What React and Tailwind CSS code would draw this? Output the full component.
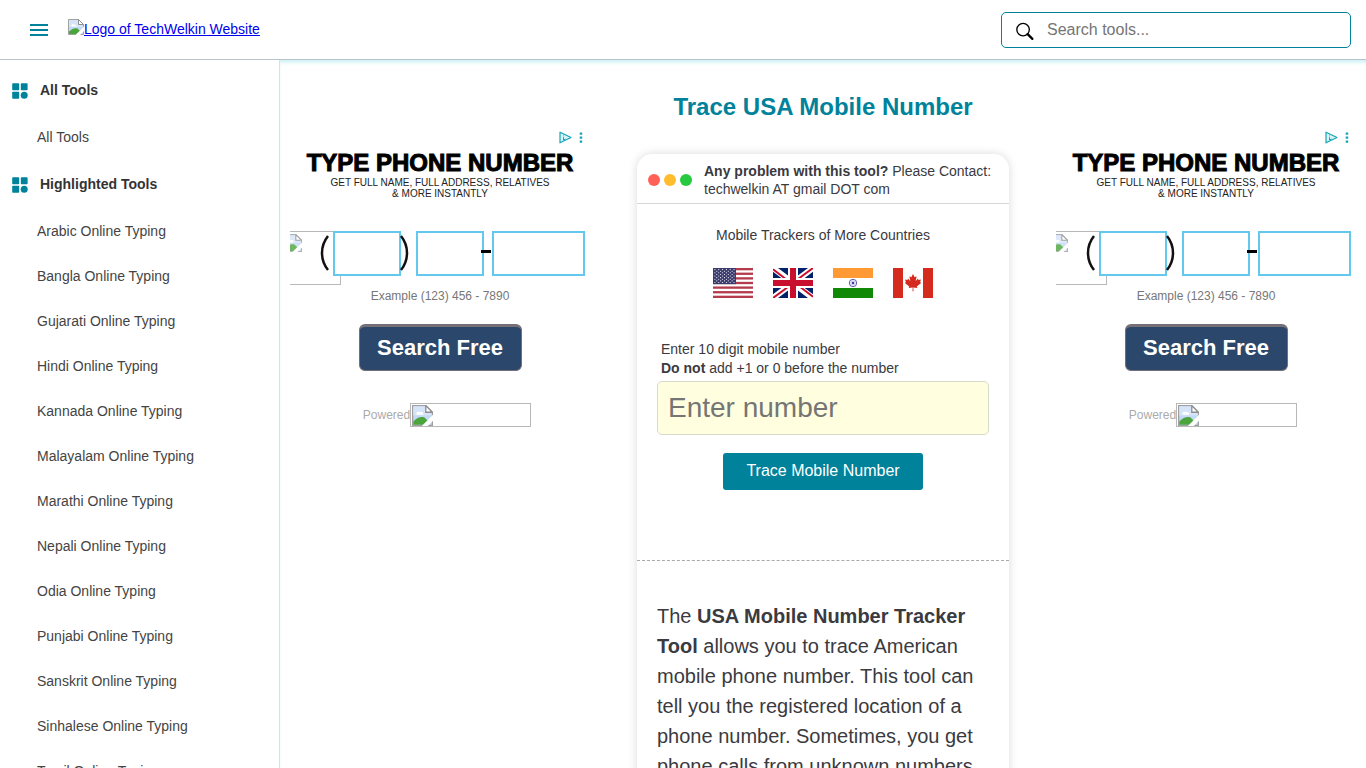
import React from "react";

const languages = [
  "Arabic", "Bangla", "Gujarati", "Hindi", "Kannada", "Malayalam", "Marathi",
  "Nepali", "Odia", "Punjabi", "Sanskrit", "Sinhalese", "Tamil", "Telugu", "Urdu",
];

function BrokenImage({ className }) {
  return (
    <svg viewBox="0 0 16 16" className={className} aria-hidden="true">
      <path d="M.5.5h10l5 5v10H.5z" fill="#c3d9f5" stroke="#a0a0a0" />
      <path d="M1 1h9.5v4.5H15V8H1z" fill="#d5e4f8" />
      <path d="M3.5 6.5c0-1.5 2-2 2.500-.8C7.500 4.800 9 6 8.500 7.500h-5z" fill="#fff" />
      <path d="M1 15v-2.500C4 9.500 7 8.500 9.500 9.500L12 12v3z" fill="#4ba53c" />
      <path d="M7.500 16 16 7.500V12l-4 4z" fill="#fff" />
      <path d="M10.500.5v5h5z" fill="#fff" stroke="#8e8e8e" />
    </svg>
  );
}

function GridIcon() {
  return (
    <svg viewBox="0 0 16 16" className="h-4 w-4 shrink-0 translate-y-px" fill="#00829b" aria-hidden="true">
      <rect x="0.200" y="0.300" width="7" height="7" rx="0.800" />
      <rect x="8.800" y="0.300" width="6.800" height="7" rx="0.800" />
      <rect x="0.200" y="8.700" width="7" height="7" rx="0.800" />
      <circle cx="12.200" cy="12.200" r="3.500" />
    </svg>
  );
}

function SidebarHeading({ children }) {
  return (
    <h2 className="flex h-[49px] items-center gap-3 px-3 text-sm font-bold text-[#333]">
      <GridIcon />
      {children}
    </h2>
  );
}

function SidebarItem({ children }) {
  return (
    <li>
      <a href="#" className="flex h-[45px] items-center pl-[37px] text-sm text-[#444]">{children}</a>
    </li>
  );
}

function UsaFlag() {
  return (
    <svg viewBox="0 0 40 30" className="h-[30px] w-10">
      <rect width="40" height="30" fill="#fff" />
      {[0, 2, 4, 6, 8, 10, 12].map((i) => (
        <rect key={i} y={(i * 30) / 13} width="40" height={30 / 13} fill="#b53c4c" />
      ))}
      <rect width="23" height="16.150" fill="#3c3b6e" />
      {[0, 1, 2, 3, 4, 5, 6, 7, 8].map((r) =>
        (r % 2 ? [0, 1, 2, 3, 4] : [0, 1, 2, 3, 4, 5]).map((c) => (
          <circle key={r + "-" + c} cx={(r % 2 ? 3.800 : 1.900) + c * 3.830} cy={1.600 + r * 1.610} r="0.550" fill="#fff" />
        ))
      )}
    </svg>
  );
}

function UkFlag() {
  return (
    <svg viewBox="0 0 40 30" className="h-[30px] w-10">
      <rect width="40" height="30" fill="#012169" />
      <path d="M0 0 40 30M40 0 0 30" stroke="#fff" strokeWidth="6" />
      <path d="M0 1.200 18 15M22 15 40 28.800M40 0 21 14M19 16 0 30" stroke="#c8102e" strokeWidth="2" />
      <path d="M20 0v30M0 15h40" stroke="#fff" strokeWidth="10" />
      <path d="M20 0v30M0 15h40" stroke="#c8102e" strokeWidth="6" />
    </svg>
  );
}

function IndiaFlag() {
  return (
    <svg viewBox="0 0 40 30" className="h-[30px] w-10">
      <rect width="40" height="30" fill="#fff" />
      <rect width="40" height="10" fill="#ff9933" />
      <rect y="20" width="40" height="10" fill="#128807" />
      <circle cx="20" cy="15" r="3.700" fill="#f1f1fb" stroke="#3a3a9c" strokeWidth="0.800" />
      <path d="M20 11.500v7M16.500 15h7M17.500 12.500l5 5M22.500 12.500l-5 5" stroke="#7a7ac0" strokeWidth="0.300" />
      <circle cx="20" cy="15" r="1.200" fill="#3a3a9c" />
    </svg>
  );
}

function CanadaFlag() {
  return (
    <svg viewBox="0 0 40 30" className="h-[30px] w-10">
      <rect width="40" height="30" fill="#fff" />
      <path d="M0 0h10v30H0zM30 0h10v30H30z" fill="#d52b1e" />
      <path
        d="M20 6l1.700 3.200 1.900-1-.9 4.800 2.300-2.400.5 1.300 2.500-.4-.9 2.600 1 .8-4.300 3.500.5 1.700-4-.6.200 3.800h-1l.2-3.800-4 .6.500-1.700-4.300-3.500 1-.8-.9-2.600 2.500.4.500-1.300 2.300 2.400-.9-4.800 1.900 1z"
        fill="#d52b1e"
      />
    </svg>
  );
}

const flags = [
  { name: "USA", Flag: UsaFlag },
  { name: "United Kingdom", Flag: UkFlag },
  { name: "India", Flag: IndiaFlag },
  { name: "Canada", Flag: CanadaFlag },
];

function PhoneAd() {
  const box = "h-[45px] min-w-0 border-2 border-[#63c8ee] bg-white outline-none";
  return (
    <aside className="mt-[70px] flex w-[300px] shrink-0 flex-col items-center text-black">
      <div className="flex h-[15px] items-center gap-[7px] self-end pr-[7px]">
        <svg viewBox="0 0 13 13" className="h-[13px] w-[13px]" fill="none" aria-hidden="true">
          <path d="M1 1.200v10.600L12 6.500z" fill="#d8f5f8" stroke="#16a5b8" strokeWidth="1.200" strokeLinejoin="round" />
          <path d="M4.500 4.500v.8M4.500 6.200V9l2-1" stroke="#16a5b8" />
        </svg>
        <svg viewBox="0 0 4 13" className="h-[13px] w-1" fill="#16a5b8" aria-hidden="true">
          <path d="M.7 1.400h2.500v2.300h-2.500zM.7 5.400h2.500v2.300h-2.500zM.7 9.400h2.500v2.300h-2.500z" />
        </svg>
      </div>
      <div className="mt-1 h-7 text-2xl leading-7 font-bold whitespace-nowrap [-webkit-text-stroke:1px_black]">TYPE PHONE NUMBER</div>
      <div className="text-center text-[10px] leading-[11px] text-[#222]">
        GET FULL NAME, FULL ADDRESS, RELATIVES
        <br />
        &amp; MORE INSTANTLY
      </div>
      <div className="relative mt-8 flex w-full items-center pl-[43px]">
        <div className="absolute top-0 left-0 h-[54px] w-[51px] overflow-hidden border-y border-r border-[#b8b8b8]">
          <BrokenImage className="mt-0.5 -ml-1.5 h-[18px] w-[18px] opacity-80" />
        </div>
        <svg viewBox="0 0 11 38" className="absolute top-[3px] left-[29px] h-[38px] w-[11px]" fill="none" aria-hidden="true">
          <path d="M9 2C1 12 1 26 9 36" stroke="#111" strokeWidth="2.500" />
        </svg>
        <input aria-label="Area code" className={box + " relative w-[68px]"} />
        <svg viewBox="0 0 11 38" className="absolute top-[3px] left-[109px] h-[38px] w-[11px]" fill="none" aria-hidden="true">
          <path d="M2 2C10 12 10 26 2 36" stroke="#111" strokeWidth="2.500" />
        </svg>
        <input aria-label="Prefix" className={box + " ml-[15px] w-[68px]"} />
        <input aria-label="Line number" className={box + " ml-2 w-[93px]"} />
        <span className="absolute top-[19px] left-[191px] h-[3px] w-2.5 bg-black" />
      </div>
      <div className="mt-3 text-xs leading-4 text-[#777]">Example (123) 456 - 7890</div>
      <button className="mt-5 h-[47px] w-[163px] rounded-md border border-t-[3px] border-[#756f78] bg-[#2b486c] pb-0.5 text-[22px] leading-6 font-bold text-white">
        Search Free
      </button>
      <div className="mt-8 ml-3.5 flex items-center text-xs text-[#aaa]">
        Powered
        <span className="flex h-6 w-[121px] items-center border border-[#b8b8b8] pl-px">
          <BrokenImage className="h-[21px] w-[21px]" />
        </span>
      </div>
    </aside>
  );
}

export default function App() {
  return (
    <div className="flex h-screen flex-col overflow-hidden bg-white font-['Liberation_Sans',Arial,sans-serif] text-[#3a3a3f]">
      <header className="relative z-10 flex h-[60px] shrink-0 items-center border-b border-[#b9c3cb] bg-white pr-[15px] pl-[30px]">
        <button aria-label="Toggle menu" className="flex w-[18px] flex-col gap-[3px]">
          <span className="h-0.5 w-full bg-[#00829b]" />
          <span className="h-0.5 w-full bg-[#00829b]" />
          <span className="h-0.5 w-full bg-[#00829b]" />
        </button>
        <a href="#" className="mb-0.5 ml-5 flex items-start text-sm leading-5 text-[#0000ee] underline">
          <BrokenImage className="h-4 w-4" />
          Logo of TechWelkin Website
        </a>
        <div className="ml-auto flex h-9 w-[350px] items-center rounded-[5px] border border-[#00829b] bg-white pl-[13px]">
          <svg viewBox="0 0 20 20" className="h-[19px] w-[19px] translate-y-0.5" fill="none" stroke="#000" aria-hidden="true">
            <circle cx="8.500" cy="8" r="6.600" strokeWidth="1.400" />
            <path d="M13.300 12.800l5 5" strokeWidth="2.400" strokeLinecap="round" />
          </svg>
          <input type="search" aria-label="Search tools" placeholder="Search tools..." className="ml-[13px] min-w-0 flex-1 text-base outline-none placeholder:text-[#757575]" />
        </div>
      </header>

      <div className="flex min-h-0 flex-1">
        <nav className="w-[280px] shrink-0 overflow-hidden border-r border-[#c5e9ee] bg-white pt-[5px]">
          <SidebarHeading>All Tools</SidebarHeading>
          <ul>
            <SidebarItem>All Tools</SidebarItem>
          </ul>
          <SidebarHeading>Highlighted Tools</SidebarHeading>
          <ul>
            {languages.map((name) => (
              <SidebarItem key={name}>{name} Online Typing</SidebarItem>
            ))}
          </ul>
        </nav>

        <main className="flex min-w-0 flex-1 items-start overflow-y-auto px-2.5 shadow-[inset_0_4px_4px_-2px_#c5eef3] [scrollbar-width:none]">
          <PhoneAd />
          <div className="flex min-w-0 flex-1 flex-col items-center">
            <h1 className="mt-8 text-2xl leading-[30px] font-bold whitespace-nowrap text-[#00829b]">Trace USA Mobile Number</h1>
            <article className="mt-8 w-4/5 max-w-[372px] rounded-t-[15px] bg-white shadow-[0_0_10px_rgba(0,0,0,0.15)]">
              <div className="flex h-[50px] items-center border-b border-[#d5d8da] pl-[11px]">
                <div className="flex shrink-0 gap-1 pt-0.5">
                  <span className="h-3 w-3 rounded-full bg-[#ff6057]" />
                  <span className="h-3 w-3 rounded-full bg-[#ffbd2e]" />
                  <span className="h-3 w-3 rounded-full bg-[#27c93f]" />
                </div>
                <p className="ml-3 pt-0.5 text-sm leading-[18px]">
                  <b>Any problem with this tool?</b> Please Contact: techwelkin AT gmail DOT com
                </p>
              </div>

              <section className="flex h-[357px] flex-col items-center border-b border-dashed border-[#aaa] px-5 pt-[21px]">
                <p className="text-sm leading-5">Mobile Trackers of More Countries</p>
                <div className="mt-[23px] flex gap-5">
                  {flags.map(({ name, Flag }) => (
                    <a key={name} href="#" aria-label={name} className="block">
                      <Flag />
                    </a>
                  ))}
                </div>
                <label htmlFor="mobile" className="mt-[42px] w-full pl-1 text-sm leading-[19px]">
                  Enter 10 digit mobile number
                  <br />
                  <b>Do not</b> add +1 or 0 before the number
                </label>
                <input
                  id="mobile"
                  type="tel"
                  placeholder="Enter number"
                  className="mt-[3px] h-[54px] w-full shrink-0 rounded-[5px] border border-[#d5dccb] bg-[#ffffdf] px-2.5 text-[28px] outline-none placeholder:text-[#757575]"
                />
                <button className="mt-[18px] h-[37px] w-[200px] shrink-0 rounded-[3px] bg-[#00829b] pb-0.5 text-base text-white">
                  Trace Mobile Number
                </button>
              </section>

              <p className="px-5 pt-10 pb-10 text-xl leading-[30px]">
                The <b>USA Mobile Number Tracker Tool</b> allows you to trace American mobile phone number. This tool
                can tell you the registered location of a phone number. Sometimes, you get phone calls from unknown
                numbers.
              </p>
            </article>
          </div>
          <PhoneAd />
        </main>
      </div>
    </div>
  );
}
